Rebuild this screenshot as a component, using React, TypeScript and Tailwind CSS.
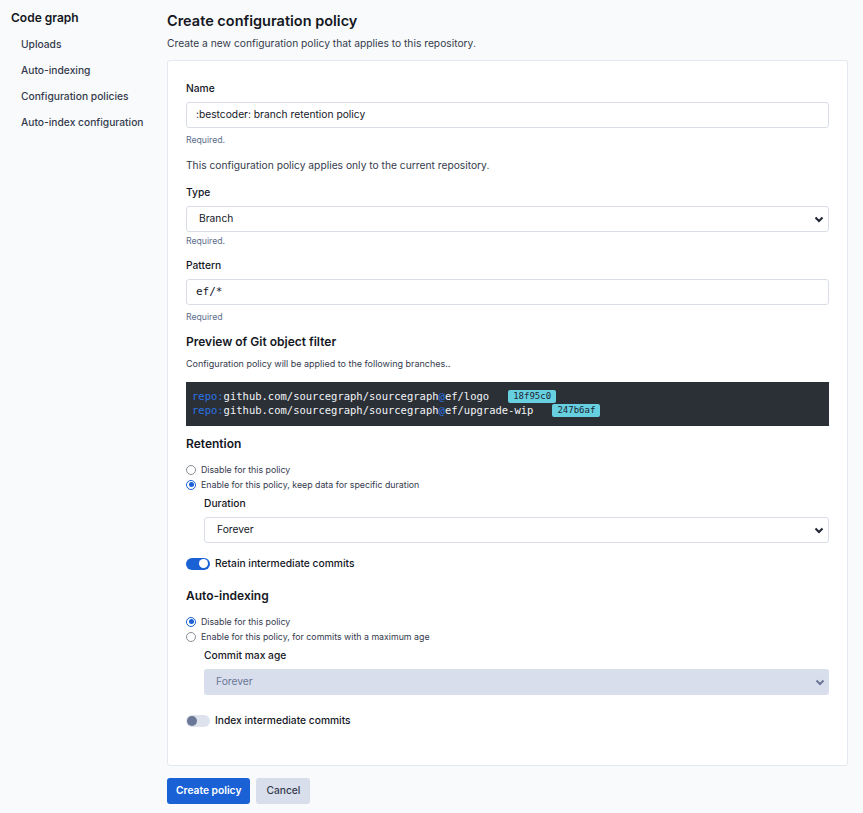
import React from "react";

function Radio({ checked, label }: { checked?: boolean; label: string }) {
  return (
    <div className="flex items-center h-[15px]">
      {checked ? (
        <span className="w-[10px] h-[10px] rounded-full border-[1.5px] border-[#1a61d6] bg-white flex items-center justify-center">
          <span className="w-[5px] h-[5px] rounded-full bg-[#1a61d6]" />
        </span>
      ) : (
        <span className="w-[10px] h-[10px] rounded-full border border-[#8a8f98] bg-white" />
      )}
      <span className="ml-[5px] text-[8.8px] leading-[12px] text-[#343a4d]">{label}</span>
    </div>
  );
}

function Chevron({ color }: { color: string }) {
  return (
    <svg width="10" height="7" viewBox="0 0 10 7" className="shrink-0">
      <path d="M1.5 1.5 L5 5 L8.5 1.5" fill="none" stroke={color} strokeWidth="2" />
    </svg>
  );
}

function Toggle({ on }: { on: boolean }) {
  return on ? (
    <span className="w-[24px] h-[12px] rounded-full bg-[#1a61d6] flex items-center justify-end pr-[2px]">
      <span className="w-[9px] h-[9px] rounded-full bg-white" />
    </span>
  ) : (
    <span className="w-[24px] h-[12px] rounded-full bg-[#dde2ec] flex items-center pl-[1px]">
      <span className="w-[10px] h-[10px] rounded-full bg-[#6b7796]" />
    </span>
  );
}

export default function App() {
  return (
    <div
      className="min-h-[813px] bg-[#f9fafb] flex text-[#343a4d]"
      style={{ fontFamily: "Inter, 'Noto Sans', sans-serif" }}
    >
      <aside className="w-[167px] shrink-0 pl-[11px] pt-[9px]">
        <div className="text-[12px] font-semibold text-[#14171f] leading-[17px]">Code graph</div>
        <nav className="mt-[10px] pl-[10px] flex flex-col gap-[9px]">
          {["Uploads", "Auto-indexing", "Configuration policies", "Auto-index configuration"].map((t) => (
            <div key={t} className="text-[10.25px] font-medium text-[#343a4d] leading-[17px]">
              {t}
            </div>
          ))}
        </nav>
      </aside>
      <main className="w-[681px] shrink-0 pt-[11px]">
        <h1 className="text-[14.5px] font-semibold text-[#14171f] leading-[20px]">Create configuration policy</h1>
        <p className="mt-[5px] text-[10.25px] leading-[14px] text-[#343a4d]">
          Create a new configuration policy that applies to this repository.
        </p>
        <div className="mt-[10px] bg-white border border-[#e4e8ef] rounded-[3px] px-[18px] pt-[20px] pb-[37px]">
          <label className="block text-[10.25px] font-medium leading-[15px] text-[#14171f]">Name</label>
          <div className="mt-[6px] h-[26px] border border-[#d8dde8] rounded-[3px] flex items-center px-[9px] text-[10.25px] text-[#14171f]">
            :bestcoder: branch retention policy
          </div>
          <div className="mt-[6px] text-[8.7px] leading-[12px] text-[#5e6e8c]">Required.</div>
          <p className="mt-[12px] text-[10.25px] leading-[14px] text-[#343a4d]">
            This configuration policy applies only to the current repository.
          </p>

          <label className="mt-[13px] block text-[10.25px] font-medium leading-[15px] text-[#14171f]">Type</label>
          <div className="mt-[6px] h-[26px] border border-[#d8dde8] rounded-[3px] flex items-center justify-between pl-[12px] pr-[4px] text-[10.25px] text-[#14171f]">
            <span>Branch</span>
            <Chevron color="#1f2433" />
          </div>
          <div className="mt-[3px] text-[8.7px] leading-[12px] text-[#5e6e8c]">Required.</div>

          <label className="mt-[11px] block text-[10.25px] font-medium leading-[15px] text-[#14171f]">Pattern</label>
          <div
            className="mt-[6px] h-[26px] border border-[#d8dde8] rounded-[3px] flex items-center px-[9px] text-[11px] text-[#14171f]"
            style={{ fontFamily: "'DejaVu Sans Mono', monospace" }}
          >
            ef/*
          </div>
          <div className="mt-[6px] text-[8.7px] leading-[12px] text-[#5e6e8c]">Required</div>

          <h2 className="mt-[10px] text-[12px] font-semibold leading-[17px] text-[#14171f]">
            Preview of Git object filter
          </h2>
          <p className="mt-[8px] text-[9px] leading-[12px] text-[#343a4d]">
            Configuration policy will be applied to the following branches..
          </p>
          <div
            className="mt-[12px] bg-[#2b3036] pt-[7px] pb-[9px] px-[6px] text-[10.5px] leading-[14px] text-[#f2f4f8]"
            style={{ fontFamily: "'DejaVu Sans Mono', 'Liberation Mono', monospace" }}
          >
            <div className="flex items-center">
              <span>
                <span className="text-[#2a73e4]">repo:</span>github.com/sourcegraph/sourcegraph
                <span className="text-[#2a73e4]">@</span>ef/logo
              </span>
              <span className="ml-[19px] bg-[#66d0e1] text-[#1d2530] text-[9px] leading-[13px] px-[5px] rounded-[2px]">
                18f95c0
              </span>
            </div>
            <div className="flex items-center">
              <span>
                <span className="text-[#2a73e4]">repo:</span>github.com/sourcegraph/sourcegraph
                <span className="text-[#2a73e4]">@</span>ef/upgrade-wip
              </span>
              <span className="ml-[19px] bg-[#66d0e1] text-[#1d2530] text-[9px] leading-[13px] px-[5px] rounded-[2px]">
                247b6af
              </span>
            </div>
          </div>

          <h2 className="mt-[9px] text-[12px] font-semibold leading-[17px] text-[#14171f]">Retention</h2>
          <div className="mt-[10px] flex flex-col">
            <Radio label="Disable for this policy" />
            <Radio checked label="Enable for this policy, keep data for specific duration" />
          </div>
          <div className="pl-[18px]">
            <label className="mt-[4px] block text-[10.25px] font-medium leading-[15px] text-[#14171f]">Duration</label>
            <div className="mt-[6px] h-[26px] border border-[#d8dde8] rounded-[3px] flex items-center justify-between pl-[12px] pr-[4px] text-[10.25px] text-[#14171f]">
              <span>Forever</span>
              <Chevron color="#1f2433" />
            </div>
          </div>
          <div className="mt-[13px] flex items-center gap-[5px]">
            <Toggle on />
            <span className="text-[10.25px] font-medium text-[#14171f] leading-[15px]">Retain intermediate commits</span>
          </div>

          <h2 className="mt-[16px] text-[12px] font-semibold leading-[17px] text-[#14171f]">Auto-indexing</h2>
          <div className="mt-[10px] flex flex-col">
            <Radio checked label="Disable for this policy" />
            <Radio label="Enable for this policy, for commits with a maximum age" />
          </div>
          <div className="pl-[18px]">
            <label className="mt-[4px] block text-[10.25px] font-medium leading-[15px] text-[#14171f]">
              Commit max age
            </label>
            <div className="mt-[6px] h-[26px] bg-[#d8deeb] rounded-[3px] flex items-center justify-between pl-[12px] pr-[4px] text-[10.25px] text-[#6b7796]">
              <span>Forever</span>
              <Chevron color="#6b7796" />
            </div>
          </div>
          <div className="mt-[18px] flex items-center gap-[5px]">
            <Toggle on={false} />
            <span className="text-[10.25px] font-medium text-[#14171f] leading-[15px]">Index intermediate commits</span>
          </div>
        </div>
        <div className="mt-[12px] flex gap-[6px]">
          <button className="h-[26px] px-[9px] rounded-[3px] bg-[#1a61d6] text-white text-[10.25px] font-semibold">
            Create policy
          </button>
          <button className="h-[26px] px-[10px] rounded-[3px] bg-[#d8deeb] text-[#343a4d] text-[10.25px] font-medium">
            Cancel
          </button>
        </div>
      </main>
    </div>
  );
}
